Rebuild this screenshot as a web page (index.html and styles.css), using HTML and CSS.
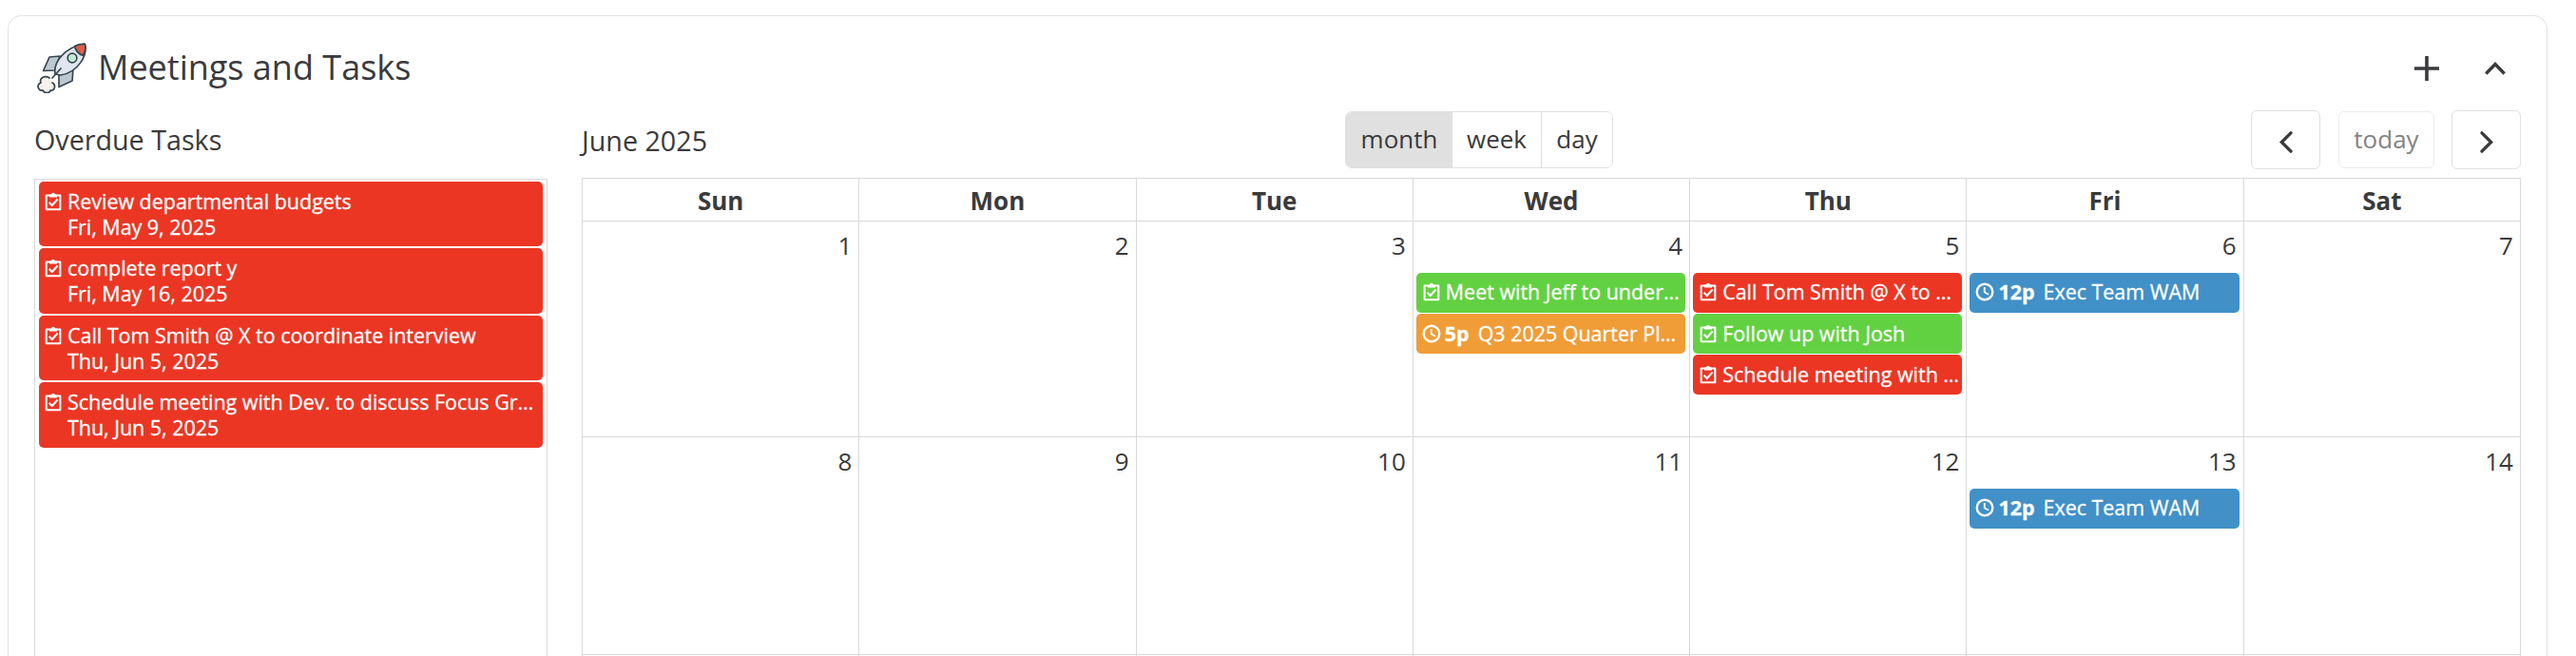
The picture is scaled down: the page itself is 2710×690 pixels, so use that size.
FILE: index.html
```
<!DOCTYPE html>
<html lang="en">
<head>
<meta charset="utf-8">
<title>Meetings and Tasks</title>
<link rel="stylesheet" href="styles.css">
</head>
<body>
<svg class="defs" aria-hidden="true">
  <symbol id="task" viewBox="0 0 18 20">
    <path d="M1.7 3.5H16.3V18.3H1.7Z" fill="none" stroke="#fff" stroke-width="2.1" stroke-linejoin="round"/>
    <path d="M5 2.5H6.8a2.3 2.3 0 0 1 4.4 0H13V5.6H5Z" fill="#fff"/>
    <path d="M4.6 10.8L7.8 14L13.6 7.6" fill="none" stroke="#fff" stroke-width="2.2"/>
  </symbol>
  <symbol id="clock" viewBox="0 0 20 20">
    <circle cx="10" cy="10" r="8.300" fill="none" stroke="#fff" stroke-width="2.400"/>
    <path d="M9.800 5V10.300L14 12.800" fill="none" stroke="#fff" stroke-width="1.900"/>
  </symbol>
</svg>
<section class="card">
  <header class="card-head">
    <svg class="rocket" viewBox="0 0 54 54" fill="none" stroke="#36454f" stroke-width="1.700" stroke-linejoin="round" stroke-linecap="round">
      <path d="M25 15L14 16L7.500 30.500L20 30Z" fill="#bcc8d0"/>
      <path d="M39 28L38 41L24 47.500L24 34Z" fill="#bcc8d0"/>
      <path d="M20 34C18 22 29 6 51 2C55 14 44 32 26 35Z" fill="#dfe6ee"/>
      <path d="M40.500 4.500Q46 2 51.500 2.500Q53 8 49.500 14.500Q42 12 40.500 4.500Z" fill="#dc5d4a"/>
      <circle cx="38" cy="17" r="4.800" fill="#c2ebd5"/>
      <path d="M26 28L17 38"/>
      <path d="M14 38C9 35 3 38 5 43C0 45 2 52 7 51C9 55 15 54 15 51C20 52 21 45 17 43" fill="#f5f1ec"/>
    </svg>
    <h1 class="title">Meetings and Tasks</h1>
    <svg class="act-plus" viewBox="0 0 26 26"><path d="M13 0V26M0 13H26" stroke="#3a3a3c" stroke-width="3.600"/></svg>
    <svg class="act-up" viewBox="0 0 22 14"><path d="M1.300 12.500L11 2.500L20.700 12.500" fill="none" stroke="#3a3a3c" stroke-width="3.400"/></svg>
  </header>
  <div class="columns">
    <aside class="overdue">
      <h2 class="subtitle">Overdue Tasks</h2>
      <div class="overdue-list">
        <div class="task"><svg class="icon"><use href="#task"/></svg><div>Review departmental budgets<br>Fri, May 9, 2025</div></div>
        <div class="task"><svg class="icon"><use href="#task"/></svg><div>complete report y<br>Fri, May 16, 2025</div></div>
        <div class="task"><svg class="icon"><use href="#task"/></svg><div>Call Tom Smith @ X to coordinate interview<br>Thu, Jun 5, 2025</div></div>
        <div class="task"><svg class="icon"><use href="#task"/></svg><div>Schedule meeting with Dev. to discuss Focus Gr…<br>Thu, Jun 5, 2025</div></div>
      </div>
    </aside>
    <main class="calendar">
      <div class="toolbar">
        <h2 class="subtitle month-name">June 2025</h2>
        <div class="views"><button class="view view-month">month</button><button class="view view-week">week</button><button class="view view-day">day</button></div>
        <div class="nav">
          <button class="arrow"><svg viewBox="0 0 14 23"><path d="M12 1.800L2.300 11.500L12 21.200"/></svg></button>
          <button class="today">today</button>
          <button class="arrow"><svg viewBox="0 0 14 23"><path d="M2 1.800L11.700 11.500L2 21.200"/></svg></button>
        </div>
      </div>
      <div class="grid">
        <div class="dow">Sun</div><div class="dow">Mon</div><div class="dow">Tue</div><div class="dow">Wed</div><div class="dow">Thu</div><div class="dow">Fri</div><div class="dow">Sat</div>
        <div class="day"><span class="num">1</span></div>
        <div class="day"><span class="num">2</span></div>
        <div class="day"><span class="num">3</span></div>
        <div class="day"><span class="num">4</span>
          <div class="event green"><svg class="icon"><use href="#task"/></svg>Meet with Jeff to under…</div>
          <div class="event orange"><svg class="icon clock"><use href="#clock"/></svg><b>5p</b>Q3 2025 Quarter Pl…</div>
        </div>
        <div class="day"><span class="num">5</span>
          <div class="event red"><svg class="icon"><use href="#task"/></svg>Call Tom Smith @ X to …</div>
          <div class="event green"><svg class="icon"><use href="#task"/></svg>Follow up with Josh</div>
          <div class="event red"><svg class="icon"><use href="#task"/></svg>Schedule meeting with …</div>
        </div>
        <div class="day"><span class="num">6</span>
          <div class="event blue"><svg class="icon clock"><use href="#clock"/></svg><b>12p</b>Exec Team WAM</div>
        </div>
        <div class="day"><span class="num">7</span></div>
        <div class="day"><span class="num">8</span></div>
        <div class="day"><span class="num">9</span></div>
        <div class="day"><span class="num">10</span></div>
        <div class="day"><span class="num">11</span></div>
        <div class="day"><span class="num">12</span></div>
        <div class="day"><span class="num">13</span>
          <div class="event blue"><svg class="icon clock"><use href="#clock"/></svg><b>12p</b>Exec Team WAM</div>
        </div>
        <div class="day"><span class="num">14</span></div>
        <div class="day"></div><div class="day"></div><div class="day"></div><div class="day"></div><div class="day"></div><div class="day"></div><div class="day"></div>
      </div>
    </main>
  </div>
</section>
</body>
</html>
```
FILE: styles.css
```
* { box-sizing: border-box; }
body {
  margin: 0;
  height: 690px;
  overflow: hidden;
  background: #fff;
  color: #3a3a3c;
  font: 26px/1.36 "Open Sans", sans-serif;
}
.defs { display: none; }
.card {
  margin: 16px 30px 0 8px;
  height: 674px;
  overflow: hidden;
  border: 1px solid #e2e2e2;
  border-bottom: 0;
  border-radius: 15px 15px 0 0;
  padding: 0 27px;
}
.card-head { display: flex; align-items: center; height: 99px; padding-top: 10px; }
.rocket { width: 54px; height: 54px; margin: -2px 0 0 2px; }
.title { margin: -1px auto 0 11px; font-size: 36px; font-weight: 400; line-height: 50px; }
.act-plus { width: 26px; height: 26px; margin-right: 48px; }
.act-up { width: 22px; height: 14px; margin-right: 16px; }
.columns { display: flex; gap: 36px; height: 574px; }
.overdue { display: flex; flex-direction: column; width: 540px; }
.subtitle { margin: 0; font-size: 28.700px; font-weight: 400; line-height: 40px; }
.overdue .subtitle { height: 72px; padding-top: 11px; }
.overdue-list {
  flex: 1;
  border: 1px solid #d9d9d9;
  border-bottom: 0;
  padding: 2px 4px;
  display: flex;
  flex-direction: column;
  gap: 2px;
}
.task {
  display: flex;
  height: 68.400px;
  padding: 7px 0 0 6px;
  border-radius: 5px;
  background: #eb3624;
  color: #fff;
  font-size: 21.450px;
  font-weight: 500;
  -webkit-text-stroke: 0.300px #fff;
  line-height: 27px;
  white-space: nowrap;
}
.icon { flex: none; width: 18px; height: 20px; margin-right: 6px; }
.task .icon { margin-top: 4px; }
.clock { width: 20px; margin: 0 4px 0 -1px; }
.calendar { width: 2040px; }
.toolbar { position: relative; display: flex; justify-content: space-between; height: 71px; }
.month-name { padding-top: 12px; }
.views {
  position: absolute;
  left: 803px;
  top: 1px;
  display: flex;
  width: 282px;
  height: 60px;
  border: 1px solid #e0e0e0;
  border-radius: 7px;
  overflow: hidden;
}
button { padding: 0; font: inherit; color: inherit; background: #fff; border: 0; }
.view-month { width: 112px; background: #e0e0e0; }
.view-week { width: 94px; border-right: 1px solid #e0e0e0; }
.view-day { width: 74px; }
.nav { display: flex; align-items: center; height: 62px; gap: 18px; }
.arrow { display: flex; align-items: center; justify-content: center; width: 73px; height: 62px; padding-top: 4px; border: 1px solid #e0e0e0; border-radius: 6px; }
.arrow svg { width: 14px; height: 23px; fill: none; stroke: #3a3a3c; stroke-width: 3.300; stroke-linecap: round; }
.today { width: 101px; height: 60px; margin-left: 1px; border: 1px solid #ebebeb; border-radius: 6px; color: #838384; }
.grid {
  display: grid;
  grid-template-columns: repeat(7, 1fr);
  grid-template-rows: 45px 227px 229px 2px;
  border: solid #d9d9d9;
  border-width: 0 1px 0 0;
}
.dow, .day { min-width: 0; border: solid #d9d9d9; border-width: 1px 0 0 1px; }
.dow { padding-top: 6px; line-height: 35px; text-align: center; font-weight: 700; }
.day { display: flex; flex-direction: column; gap: 1.500px; padding: 8px 4px 0 3px; }
.day:empty { padding: 0; }
.num { height: 44.500px; padding-right: 3px; text-align: right; }
.event {
  display: flex;
  align-items: center;
  height: 41.700px;
  padding: 0 0 1px 7px;
  border-radius: 5px;
  color: #fff;
  font-size: 21.450px;
  font-weight: 500;
  -webkit-text-stroke: 0.300px #fff;
  line-height: 30px;
  white-space: nowrap;
}
.event b { margin-right: 9px; }
.red { background: #eb3624; }
.green { background: #62d141; }
.orange { background: #f09d38; }
.blue { background: #4190c7; }
```
